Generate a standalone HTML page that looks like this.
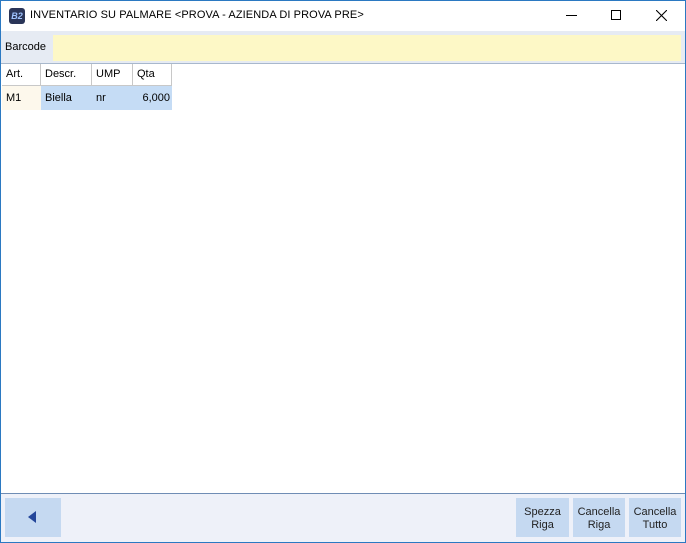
<!DOCTYPE html>
<html><head><style>
*{margin:0;padding:0;box-sizing:border-box}
body{width:686px;height:543px;overflow:hidden;font-family:"Liberation Sans",sans-serif;font-size:11px;color:#000;background:#fff;position:relative}
.win{position:absolute;left:0;top:0;width:686px;height:543px;border:1px solid #2b79c2}
.abs{position:absolute}
.title{left:30px;top:9px;font-size:11px;letter-spacing:0.1px}
.bar{left:1px;top:31px;width:684px;height:32px;background:#e6ebf3}
.inp{left:53px;top:35px;width:628px;height:26px;background:#fdf8c6}
.grid{left:1px;top:63px;width:684px;height:431px;background:#fff;border-top:1px solid #a8b8cc;border-bottom:1px solid #6f8db5}
.cell{position:absolute;height:22px;line-height:21px;padding-left:4px;font-size:11px}
.h{border-right:1px solid #c8c8c8;border-bottom:1px solid #c8c8c8;background:#fff}
.bot{left:1px;top:494px;width:684px;height:48px;background:#eef1f9}
.btn{position:absolute;background:#c5d9f1;text-align:center;font-size:11px;line-height:13px;padding-top:8px;color:#222}
</style></head><body>
<div class="win"></div>
<div class="abs" style="left:9px;top:8px;width:16px;height:16px;background:#2a3558;border-radius:3px;color:#9fc3ff;font-size:9px;font-style:italic;line-height:16px;text-align:center;font-weight:bold">B2</div>
<div class="abs title">INVENTARIO SU PALMARE &lt;PROVA - AZIENDA DI PROVA PRE&gt;</div>
<div class="abs" style="left:566px;top:15px;width:11px;height:1px;background:#000"></div>
<div class="abs" style="left:611px;top:10px;width:10px;height:10px;border:1px solid #000"></div>
<svg class="abs" style="left:656px;top:10px" width="11" height="11"><path d="M0 0L11 11M11 0L0 11" stroke="#000" stroke-width="1.1"/></svg>
<div class="abs bar"></div>
<div class="abs" style="left:5px;top:41px">Barcode</div>
<div class="abs inp"></div>
<div class="abs grid">
<div class="cell h" style="left:1px;top:0;width:39px">Art.</div>
<div class="cell h" style="left:40px;top:0;width:51px">Descr.</div>
<div class="cell h" style="left:91px;top:0;width:41px">UMP</div>
<div class="cell h" style="left:132px;top:0;width:39px">Qta</div>
<div class="cell" style="left:1px;top:22px;width:39px;height:24px;line-height:24px;background:#fdf8ec">M1</div>
<div class="cell" style="left:40px;top:22px;width:131px;height:24px;line-height:24px;background:#c5dcf5"></div>
<div class="cell" style="left:40px;top:22px;height:24px;line-height:24px">Biella</div>
<div class="cell" style="left:91px;top:22px;height:24px;line-height:24px">nr</div>
<div class="cell" style="left:132px;top:22px;width:37px;height:24px;line-height:24px;text-align:right">6,000</div>
</div>
<div class="abs bot"></div>
<div class="abs" style="left:5px;top:498px;width:56px;height:39px;background:#c5d9f1"></div>
<svg class="abs" style="left:28px;top:511px" width="8" height="12"><path d="M8 0L0 6L8 12Z" fill="#23469a"/></svg>
<div class="btn" style="left:516px;top:498px;width:53px;height:39px">Spezza<br>Riga</div>
<div class="btn" style="left:573px;top:498px;width:52px;height:39px">Cancella<br>Riga</div>
<div class="btn" style="left:629px;top:498px;width:52px;height:39px">Cancella<br>Tutto</div>
</body></html>
